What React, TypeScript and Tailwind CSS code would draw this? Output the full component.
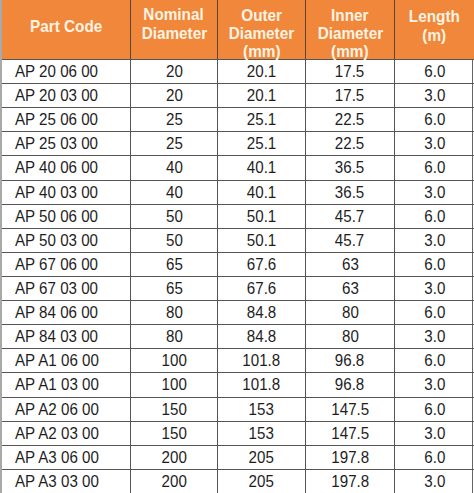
const rows: [string, string, string, string, string][] = [
  ["AP 20 06 00", "20", "20.1", "17.5", "6.0"],
  ["AP 20 03 00", "20", "20.1", "17.5", "3.0"],
  ["AP 25 06 00", "25", "25.1", "22.5", "6.0"],
  ["AP 25 03 00", "25", "25.1", "22.5", "3.0"],
  ["AP 40 06 00", "40", "40.1", "36.5", "6.0"],
  ["AP 40 03 00", "40", "40.1", "36.5", "3.0"],
  ["AP 50 06 00", "50", "50.1", "45.7", "6.0"],
  ["AP 50 03 00", "50", "50.1", "45.7", "3.0"],
  ["AP 67 06 00", "65", "67.6", "63", "6.0"],
  ["AP 67 03 00", "65", "67.6", "63", "3.0"],
  ["AP 84 06 00", "80", "84.8", "80", "6.0"],
  ["AP 84 03 00", "80", "84.8", "80", "3.0"],
  ["AP A1 06 00", "100", "101.8", "96.8", "6.0"],
  ["AP A1 03 00", "100", "101.8", "96.8", "3.0"],
  ["AP A2 06 00", "150", "153", "147.5", "6.0"],
  ["AP A2 03 00", "150", "153", "147.5", "3.0"],
  ["AP A3 06 00", "200", "205", "197.8", "6.0"],
  ["AP A3 03 00", "200", "205", "197.8", "3.0"],
];

const cols = "grid-cols-[129px_87px_88px_89px_79px]";
const cell = "flex min-h-0 items-center justify-center border-r border-[#555]";

function HeadCell({ lines, className }: { lines: string[]; className: string }) {
  return (
    <div className={`flex flex-col items-center border-r border-[#5b4536] last:border-r-0 ${className}`}>
      {lines.map((line) => (
        <span key={line} className="scale-x-[0.9] whitespace-nowrap">
          {line}
        </span>
      ))}
    </div>
  );
}

export default function App() {
  return (
    <div className="h-[493px] w-[474px] overflow-hidden bg-white font-['Liberation_Sans',Arial,sans-serif]">
      <div className="grid h-full w-[473px] grid-rows-[59px_repeat(18,minmax(0,1fr))] border-l-2 border-r border-l-[#a9a9a9] border-r-[#666]">
        <div className={`grid ${cols} bg-[#f0873a] text-[17px] font-bold text-[#fff3e2]`}>
          <HeadCell lines={["Part Code"]} className="pt-[17px] leading-[19px]" />
          <HeadCell lines={["Nominal", "Diameter"]} className="pt-[5px] leading-[19px]" />
          <HeadCell lines={["Outer", "Diameter", "(mm)"]} className="pt-[7px] leading-[18px]" />
          <HeadCell lines={["Inner", "Diameter", "(mm)"]} className="pt-[7px] leading-[18px]" />
          <HeadCell lines={["Length", "(m)"]} className="pt-[7px] leading-[19px]" />
        </div>
        {rows.map((r) => (
          <div
            key={r[0]}
            className={`grid ${cols} min-h-0 border-t border-[#555] text-[17px] leading-none text-[#1e1e1e]`}
          >
            <div className="flex min-h-0 items-center border-r border-[#555] pl-[13px]">
              <span className="origin-left scale-x-[0.89] whitespace-nowrap">{r[0]}</span>
            </div>
            <div className={cell}>
              <span className="scale-x-[0.89]">{r[1]}</span>
            </div>
            <div className={cell}>
              <span className="scale-x-[0.89]">{r[2]}</span>
            </div>
            <div className={cell}>
              <span className="scale-x-[0.89]">{r[3]}</span>
            </div>
            <div className="flex min-h-0 items-center justify-center">
              <span className="scale-x-[0.89]">{r[4]}</span>
            </div>
          </div>
        ))}
      </div>
    </div>
  );
}
